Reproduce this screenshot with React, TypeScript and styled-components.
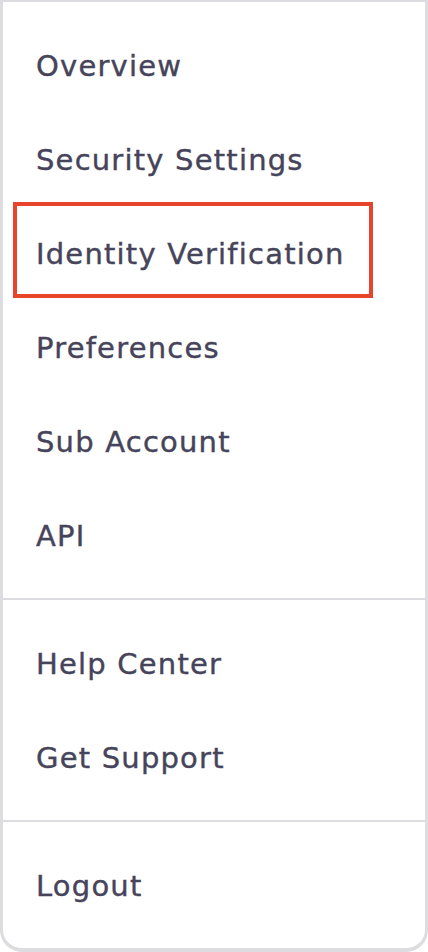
import React from 'react';
import styled, { createGlobalStyle } from 'styled-components';

const GlobalStyle = createGlobalStyle`
    html, body {
        margin: 0;
        padding: 0;
        background: #ffffff;
    }
    body {
        font-family: "DejaVu Sans", "Open Sans", sans-serif;
    }
`;

const Card = styled.nav`
    box-sizing: border-box;
    width: 100%;
    height: 952px;
    background: #ffffff;
    border: 3px solid #dcdce1;
    border-top-width: 2px;
    border-bottom-width: 4px;
    border-radius: 0 0 22px 22px;
    display: flex;
    flex-direction: column;
`;

const Group = styled.div<{ $last?: boolean }>`
    padding: 16px 0;
    border-bottom: ${p => (p.$last ? 'none' : '2px solid #dcdce1')};
    display: flex;
    flex-direction: column;
`;

const Item = styled.div`
    position: relative;
    height: 94px;
    display: flex;
    align-items: center;
    padding-left: 33px;
    padding-top: 2px;
    box-sizing: border-box;
    font-size: 29px;
    font-weight: 400;
    letter-spacing: 1.2px;
    color: #46445a;
    -webkit-text-stroke: 0.4px #46445a;
    cursor: pointer;
`;

const Highlight = styled.span`
    position: absolute;
    left: 10px;
    top: -4px;
    width: 360px;
    height: 96px;
    box-sizing: border-box;
    border: 4px solid #e8432b;
    pointer-events: none;
`;

const groups = [
    ['Overview', 'Security Settings', 'Identity Verification', 'Preferences', 'Sub Account', 'API'],
    ['Help Center', 'Get Support'],
    ['Logout'],
];

const App: React.FC = () => {
    const active = 'Identity Verification';

    return (
        <>
            <GlobalStyle />
            <Card>
                {groups.map((items, i) => (
                    <Group key={i} $last={i === groups.length - 1}>
                        {items.map(label => (
                            <Item key={label}>
                                {label}
                                {label === active && <Highlight />}
                            </Item>
                        ))}
                    </Group>
                ))}
            </Card>
        </>
    );
};

export default App;
